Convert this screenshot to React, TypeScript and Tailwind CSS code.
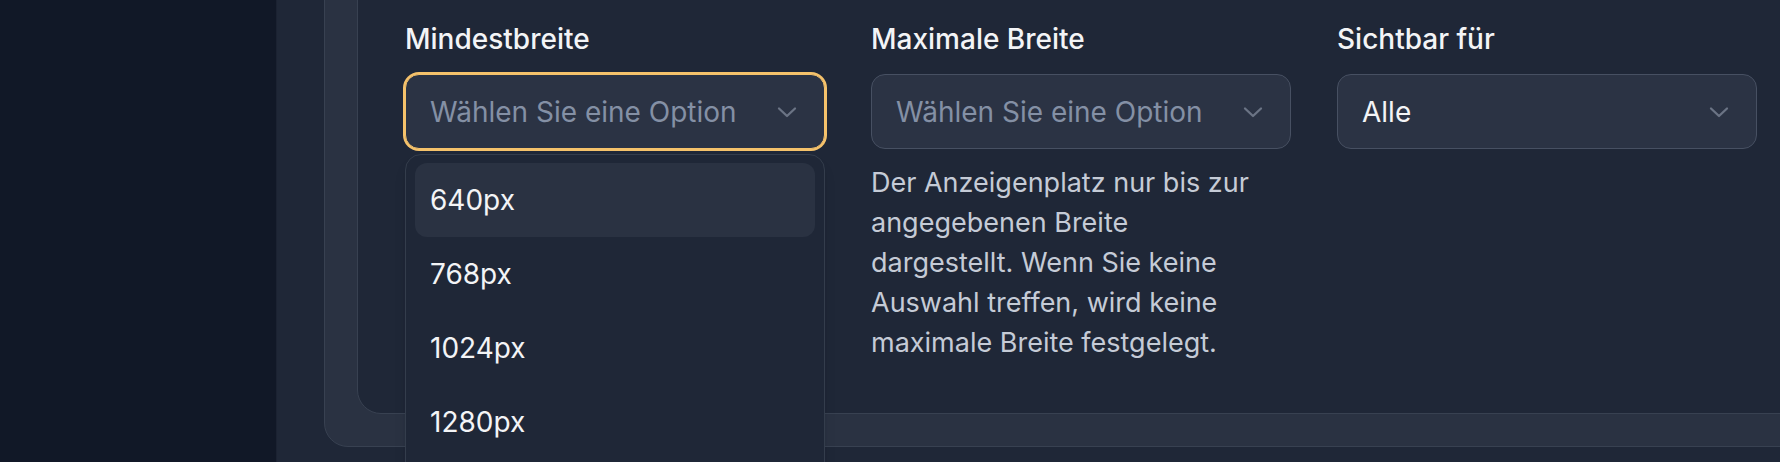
import React from "react";

function Chevron() {
  return (
    <svg width="20" height="12" viewBox="0 0 20 12" fill="none" className="shrink-0">
      <path d="M2 2.5l8 7.5 8-7.5" stroke="#6b7485" strokeWidth="2.3" strokeLinecap="round" strokeLinejoin="round" />
    </svg>
  );
}

function Select({ value, placeholder, focused }: { value?: string; placeholder?: string; focused?: boolean }) {
  return (
    <div
      className={
        focused
          ? "flex h-[75px] items-center justify-between rounded-[14px] border border-[#f5c26b] bg-[#2b3344] pl-[24px] pr-[27px] ring-2 ring-[#f5c26b]"
          : "flex h-[75px] items-center justify-between rounded-[14px] border border-[#475062] bg-[#2b3344] pl-[24px] pr-[27px]"
      }
    >
      {value ? (
        <span className="text-[28px] leading-[42px] text-[#f3f4f6]">{value}</span>
      ) : (
        <span className="text-[28px] leading-[42px] text-[#8490a5]">{placeholder}</span>
      )}
      <Chevron />
    </div>
  );
}

export default function App() {
  const options = ["640px", "768px", "1024px", "1280px", "1536px"];
  return (
    <div className="flex h-[462px] w-[1780px] overflow-hidden bg-[#1f2737] font-['Inter',sans-serif]">
      <aside className="w-[277px] shrink-0 border-r border-[#1b2232] bg-[#111827]" />
      <main className="min-w-0 flex-1 pl-[47px]">
        <div className="mt-[-63px] w-[1600px] rounded-[24px] border border-[#384151] bg-[#2a3242] p-[32px]">
          <div className="rounded-[24px] border border-[#384151] bg-[#1f2737] px-[47px] pb-[50px] pt-[47px]">
            <div className="grid grid-cols-[420px_420px_420px] gap-x-[46px]">
              <div>
                <div className="mb-[14px] text-[28px] font-medium leading-[42px] text-[#f3f4f6]">Mindestbreite</div>
                <div className="relative">
                  <Select placeholder="Wählen Sie eine Option" focused />
                  <div className="absolute left-0 right-0 top-[calc(100%+5px)] z-10 rounded-[16px] border border-[#343d4c] bg-[#1f2737] px-[9px] pt-[8px] pb-[8px] shadow-lg">
                    {options.map((o, i) => (
                      <div
                        key={o}
                        className={
                          i === 0
                            ? "flex h-[74px] items-center rounded-[12px] bg-[#2a3242] px-[15px] text-[28px] text-[#f3f4f6]"
                            : "flex h-[74px] items-center rounded-[12px] px-[15px] text-[28px] text-[#f3f4f6]"
                        }
                      >
                        {o}
                      </div>
                    ))}
                  </div>
                </div>
              </div>
              <div>
                <div className="mb-[14px] text-[28px] font-medium leading-[42px] text-[#f3f4f6]">Maximale Breite</div>
                <Select placeholder="Wählen Sie eine Option" />
                <p className="mt-[14px] max-w-[398px] text-[27px] leading-[40px] text-[#c5cbd6]">
                  Der Anzeigenplatz nur bis zur angegebenen Breite dargestellt. Wenn Sie keine Auswahl treffen, wird keine maximale Breite festgelegt.
                </p>
              </div>
              <div>
                <div className="mb-[14px] text-[28px] font-medium leading-[42px] text-[#f3f4f6]">Sichtbar für</div>
                <Select value="Alle" />
              </div>
            </div>
          </div>
        </div>
      </main>
    </div>
  );
}
